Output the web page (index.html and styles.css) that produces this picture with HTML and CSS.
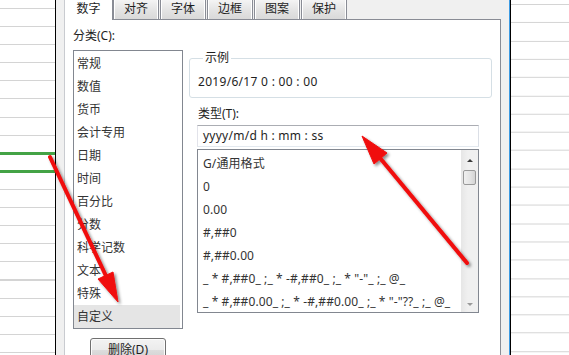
FILE: index.html
```html
<!DOCTYPE html>
<html>
<head>
<meta charset="utf-8">
<link rel="stylesheet" href="styles.css">
</head>
<body>
<div class="screen">
  <div class="sheet sheet-left"></div>
  <div class="dialog">
    <div class="tabs">
      <div class="tab tab-active">数字</div>
      <div class="tab">对齐</div>
      <div class="tab">字体</div>
      <div class="tab">边框</div>
      <div class="tab">图案</div>
      <div class="tab">保护</div>
    </div>
    <div class="panel">
      <div class="col-left">
        <div class="label">分类(C):</div>
        <div class="catlist">
          <div class="item">常规</div>
          <div class="item">数值</div>
          <div class="item">货币</div>
          <div class="item">会计专用</div>
          <div class="item">日期</div>
          <div class="item">时间</div>
          <div class="item">百分比</div>
          <div class="item">分数</div>
          <div class="item">科学记数</div>
          <div class="item">文本</div>
          <div class="item">特殊</div>
          <div class="item item-selected">自定义</div>
        </div>
        <div class="btn">删除(D)</div>
      </div>
      <div class="col-right">
        <fieldset class="sample">
          <legend>示例</legend>
          <div class="sample-text">2019/6/17 0 : 00 : 00</div>
        </fieldset>
        <div class="label type-label">类型(T):</div>
        <div class="type-input">yyyy/m/d h : mm : ss</div>
        <div class="typelist">
          <div class="typelist-items">
            <div class="titem">G/通用格式</div>
            <div class="titem">0</div>
            <div class="titem">0.00</div>
            <div class="titem">#,##0</div>
            <div class="titem">#,##0.00</div>
            <div class="titem">_ * #,##0_ ;_ * -#,##0_ ;_ * "-"_ ;_ @_</div>
            <div class="titem">_ * #,##0.00_ ;_ * -#,##0.00_ ;_ * "-"??_ ;_ @_</div>
          </div>
          <div class="scrollbar">
            <div class="arrow-up"></div>
            <div class="thumb"></div>
            <div class="track"></div>
            <div class="arrow-down"></div>
          </div>
        </div>
      </div>
    </div>
  </div>
  <div class="sheet sheet-right"></div>
  <svg class="arrows" width="569" height="355" viewBox="0 0 569 355">
    <defs>
      <filter id="sh" x="-20%" y="-20%" width="140%" height="140%">
        <feDropShadow dx="2" dy="2" stdDeviation="1.5" flood-color="#000" flood-opacity="0.45"/>
      </filter>
    </defs>
    <g filter="url(#sh)" fill="#f00a0a" stroke="#f00a0a">
      <line x1="50" y1="157" x2="106" y2="276" stroke-width="4" stroke-linecap="round"/>
      <polygon points="118,302 98,279 113,272" stroke-width="1" stroke-linejoin="round"/>
      <line x1="467" y1="263" x2="380" y2="158" stroke-width="4" stroke-linecap="round"/>
      <polygon points="362,136 387,153 374,164" stroke-width="1" stroke-linejoin="round"/>
    </g>
  </svg>
</div>
</body>
</html>
```

FILE: styles.css
```css
html, body {
  margin: 0;
  padding: 0;
  background: #fff;
}

.screen {
  position: relative;
  display: flex;
  width: 569px;
  height: 355px;
  overflow: hidden;
  font-family: "Noto Sans", "Noto Sans CJK SC", sans-serif;
  font-size: 12px;
  color: #1e1e1e;
}

.sheet {
  flex: none;
  height: 355px;
  background-color: #fff;
}

.sheet-left {
  width: 55px;
  border-right: 1px solid #000;
  background-image:
    linear-gradient(#44a346, #44a346),
    linear-gradient(#44a346, #44a346),
    repeating-linear-gradient(to bottom, #d4d4d4 0 1px, transparent 1px 18.1px);
  background-repeat: no-repeat, no-repeat, repeat;
  background-size: 100% 3px, 100% 3px, 100% 362px;
  background-position: 0 152px, 0 170px, 0 8px;
}

.sheet-right {
  flex: 1;
  border-left: 1px solid #000;
  background-image: repeating-linear-gradient(to bottom, #d4d4d4 0 1px, transparent 1px 18.26px);
  background-size: 100% 365.2px;
  background-position: 0 4px;
}

.dialog {
  flex: none;
  width: 454px;
  background: #f0f0f0;
  border-right: 1px solid #3d9be3;
  padding-left: 8px;
  box-sizing: border-box;
  display: flex;
  flex-direction: column;
}

.tabs {
  display: flex;
  height: 19px;
  flex: none;
}

.tab {
  width: 46px;
  height: 19px;
  line-height: 18px;
  text-align: center;
  border: 1px solid #898c95;
  border-top: none;
  border-bottom: none;
  margin-right: 1px;
  background: linear-gradient(#f4f4f4, #e3e3e3 55%, #d9d9d9);
  box-shadow: inset 1px 0 0 #fff, inset -1px 0 0 #fff;
  box-sizing: border-box;
  color: #1e1e1e;
}

.tab-active {
  width: 49px;
  margin-right: 0;
  background: #fff;
  box-shadow: none;
  border-left-color: #c9cbd0;
  position: relative;
  z-index: 1;
  height: 20px;
}

.panel {
  width: 437px;
  flex: 1;
  border: 1px solid #898c95;
  border-left-color: #c9cbd0;
  border-bottom: none;
  background: #fff;
  box-sizing: border-box;
  padding: 8px 0 0 8px;
  display: flex;
  gap: 6px;
}

.col-left {
  width: 110px;
  flex: none;
}

.label {
  height: 16px;
  line-height: 16px;
}

.catlist {
  margin-top: 6px;
  height: 279px;
  border: 1px solid #828790;
  box-sizing: border-box;
  background: #fff;
  padding: 1px 1px 0 0;
}

.item {
  height: 23px;
  line-height: 23px;
  padding-left: 3px;
  margin-right: 1px;
  color: #333;
}

.item-selected {
  background: #e5e5e5;
}

.btn {
  margin: 9px 0 0 17px;
  width: 76px;
  height: 24px;
  line-height: 22px;
  border: 1px solid #707070;
  border-radius: 3px;
  box-sizing: border-box;
  text-align: center;
  background: linear-gradient(#f3f3f3, #ebebeb 50%, #dddddd 50%, #cfcfcf);
  box-shadow: inset 0 0 0 1px #fcfcfc;
}

.col-right {
  width: 303px;
  flex: none;
  padding-top: 22px;
}

.sample {
  margin: 0;
  padding: 8px 8px 7px 8px;
  border: 1px solid #d5dfe5;
  border-radius: 3px;
  box-sizing: border-box;
  width: 303px;
}

.sample legend {
  padding: 0 2px;
  margin-left: 5px;
  line-height: 16px;
  height: 16px;
}

.sample-text {
  height: 16px;
  line-height: 16px;
  letter-spacing: 0.3px;
}

.type-label {
  margin-top: 8px;
  padding-left: 9px;
}

.type-input {
  margin: 3px 0 0 8px;
  width: 282px;
  height: 22px;
  box-sizing: border-box;
  border: 1px solid #abadb3;
  border-left-color: #e2e3ea;
  border-right-color: #dbdfe6;
  border-bottom-color: #e3e9ef;
  line-height: 20px;
  padding-left: 5px;
  background: #fff;
  letter-spacing: 0.25px;
}

.typelist {
  margin: 2px 0 0 8px;
  width: 282px;
  height: 164px;
  box-sizing: border-box;
  border: 1px solid #828790;
  background: #fff;
  display: flex;
}

.typelist-items {
  flex: 1;
  padding-top: 2px;
  overflow: hidden;
}

.titem {
  height: 23px;
  line-height: 23px;
  padding-left: 5px;
  white-space: nowrap;
  color: #333;
  letter-spacing: 0.1px;
}

.scrollbar {
  width: 17px;
  flex: none;
  background: linear-gradient(to right, #e6e6e6, #f0f0f0 40%, #f0f0f0);
  display: flex;
  flex-direction: column;
  align-items: center;
}

.arrow-up, .arrow-down {
  width: 0;
  height: 0;
  border-left: 3px solid transparent;
  border-right: 3px solid transparent;
  flex: none;
}

.arrow-up {
  margin-top: 9px;
  border-bottom: 3px solid #3a3a3a;
}

.arrow-down {
  margin-bottom: 6px;
  border-top: 3px solid #9a9a9a;
}

.thumb {
  margin-top: 8px;
  width: 13px;
  height: 15px;
  box-sizing: border-box;
  border: 1px solid #9a9a9a;
  border-radius: 2px;
  background: linear-gradient(to right, #f0f0f0, #e4e4e4 55%, #d4d4d4);
  flex: none;
}

.track {
  flex: 1;
}

.arrows {
  position: absolute;
  left: 0;
  top: 0;
  pointer-events: none;
}
```
